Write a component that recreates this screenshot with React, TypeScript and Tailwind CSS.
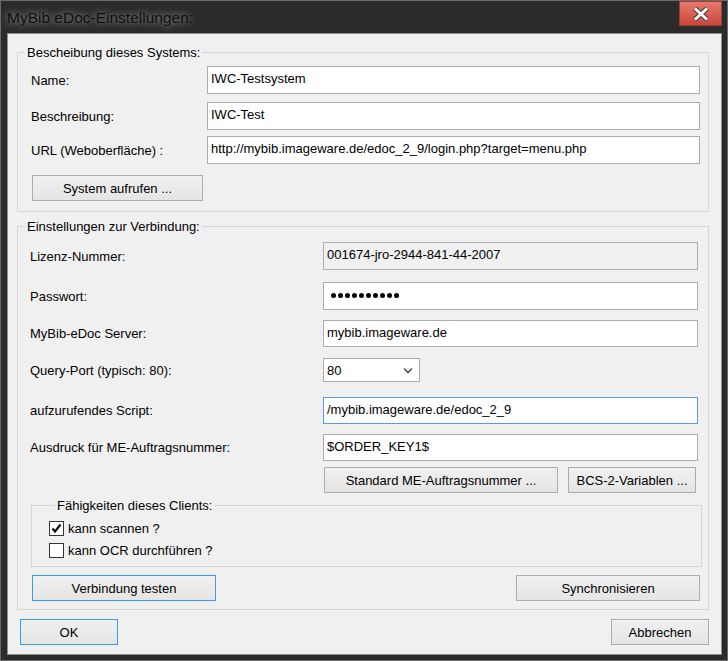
import React from "react";

const Input = ({
  value,
  width = "w-[493px]",
  height = "h-[28px]",
  readOnly = false,
  focus = false,
}: {
  value: string;
  width?: string;
  height?: string;
  readOnly?: boolean;
  focus?: boolean;
}) => (
  <div
    className={`${width} ${height} flex items-center pl-[3px] pb-[3px] border text-[13px] leading-[15px] text-black whitespace-nowrap overflow-hidden ${
      readOnly ? "bg-[#f0f0f0]" : "bg-white"
    } ${focus ? "border-[#569de5]" : "border-[#abadb3]"}`}
  >
    {value}
  </div>
);

const Btn = ({
  label,
  width,
  blue = false,
}: {
  label: string;
  width: string;
  blue?: boolean;
}) => (
  <button
    className={`${width} h-[26px] flex items-center justify-center border bg-gradient-to-b from-[#f0f0f0] to-[#e5e5e5] text-[13px] leading-[15px] text-black ${
      blue ? "border-[#3c9bef]" : "border-[#acacac]"
    }`}
  >
    {label}
  </button>
);

const Legend = ({ text, indent }: { text: string; indent: string }) => (
  <legend className={`${indent} px-[2px] text-[13px] leading-[15px] text-black`}>
    {text}
  </legend>
);

const Checkbox = ({ checked, label }: { checked: boolean; label: string }) => (
  <div className="flex items-center gap-[4px] h-[15px]">
    <div className="w-[15px] h-[15px] border border-[#333333] bg-white flex items-center justify-center">
      {checked && (
        <svg width="13" height="13" viewBox="0 0 13 13">
          <polyline
            points="2.5,6.5 5,9.5 10.5,2.5"
            fill="none"
            stroke="#111"
            strokeWidth="2.3"
          />
        </svg>
      )}
    </div>
    <span className="text-[13px] leading-[15px] text-black">{label}</span>
  </div>
);

export default function App() {
  const row1 = "flex items-center pl-[13px]";
  const row2 = "flex items-center pl-[12px]";
  const lab1 = "w-[176px] text-[13px] leading-[15px] text-black";
  const lab2 = "w-[293px] text-[13px] leading-[15px] text-black";

  return (
    <div className="w-[728px] h-[661px] bg-[#2b2b2b] border border-[#6b6b6b] flex flex-col font-['Liberation_Sans',Arial,sans-serif]">
      {/* title bar */}
      <div className="h-[32px] flex justify-between pl-[6px] pr-[5px]">
        <span className="h-[32px] flex items-center pt-[1px] text-[15.5px] text-[#101010] [text-shadow:0_0_6px_rgba(255,255,255,0.45),0_0_12px_rgba(255,255,255,0.3)]">
          MyBib eDoc-Einstellungen:
        </span>
        <button className="w-[43px] h-[25px] border border-[#9e3b31] bg-gradient-to-b from-[#e9786d] to-[#c8463a] flex items-center justify-center">
          <svg width="20" height="16" viewBox="0 0 20 16">
            <path d="M4 2.5 L16 13.5 M16 2.5 L4 13.5" stroke="#3a3a3a" strokeWidth="5" />
            <path d="M4 2.5 L16 13.5 M16 2.5 L4 13.5" stroke="#ffffff" strokeWidth="3" />
          </svg>
        </button>
      </div>

      {/* client area */}
      <div className="ml-[6px] w-[715px] h-[622px] bg-[#f0f0f0] border border-[#8c8c8c] flex flex-col">
        <fieldset className="mt-[11px] ml-[9px] w-[692px] border border-[#d5d5d5] pt-[6px] pb-[10px]">
          <Legend text="Bescheibung dieses Systems:" indent="ml-[7px]" />
          <div className={row1}>
            <span className={lab1}>Name:</span>
            <Input value="IWC-Testsystem" />
          </div>
          <div className={`${row1} mt-[8px]`}>
            <span className={lab1}>Beschreibung:</span>
            <Input value="IWC-Test" />
          </div>
          <div className={`${row1} mt-[6px]`}>
            <span className={lab1}>URL (Weboberfläche) :</span>
            <Input value="http://mybib.imageware.de/edoc_2_9/login.php?target=menu.php" />
          </div>
          <div className="mt-[11px] ml-[14px]">
            <Btn label="System aufrufen ..." width="w-[171px]" />
          </div>
        </fieldset>

        <fieldset className="mt-[7px] ml-[9px] w-[692px] border border-[#d5d5d5] pt-[8px] pb-[8px]">
          <Legend text="Einstellungen zur Verbindung:" indent="ml-[7px]" />
          <div className={row2}>
            <span className={lab2}>Lizenz-Nummer:</span>
            <Input value="001674-jro-2944-841-44-2007" width="w-[375px]" readOnly />
          </div>
          <div className={`${row2} mt-[12px]`}>
            <span className={lab2}>Passwort:</span>
            <div className="w-[375px] h-[28px] bg-white border border-[#abadb3] flex items-center gap-[2px] pl-[7px] pb-[2px]">
              {Array.from({ length: 10 }).map((_, i) => (
                <span key={i} className="w-[5px] h-[5px] rounded-full bg-black" />
              ))}
            </div>
          </div>
          <div className={`${row2} mt-[10px]`}>
            <span className={lab2}>MyBib-eDoc Server:</span>
            <Input value="mybib.imageware.de" width="w-[375px]" height="h-[27px]" />
          </div>
          <div className={`${row2} mt-[11px]`}>
            <span className={lab2}>Query-Port (typisch: 80):</span>
            <div className="w-[97px] h-[24px] bg-white border border-[#acacac] flex items-center justify-between pl-[3px] pr-[6px] text-[13px] leading-[15px] text-black">
              <span>80</span>
              <svg width="10" height="7" viewBox="0 0 10 7">
                <polyline points="1,1.5 5,5.5 9,1.5" fill="none" stroke="#555" strokeWidth="1.6" />
              </svg>
            </div>
          </div>
          <div className={`${row2} mt-[15px]`}>
            <span className={lab2}>aufzurufendes Script:</span>
            <Input value="/mybib.imageware.de/edoc_2_9" width="w-[375px]" height="h-[27px]" focus />
          </div>
          <div className={`${row2} mt-[10px]`}>
            <span className={lab2}>Ausdruck für ME-Auftragsnummer:</span>
            <Input value="$ORDER_KEY1$" width="w-[375px]" height="h-[27px]" />
          </div>
          <div className="flex gap-[10px] mt-[6px] pl-[306px]">
            <Btn label="Standard ME-Auftragsnummer ..." width="w-[234px]" />
            <Btn label="BCS-2-Variablen ..." width="w-[128px]" />
          </div>

          <fieldset className="mt-[5px] ml-[13px] w-[671px] border border-[#d5d5d5] pt-[8px] pb-[8px] pl-[17px]">
            <Legend text="Fähigkeiten dieses Clients:" indent="ml-[6px]" />
            <Checkbox checked label="kann scannen ?" />
            <div className="mt-[7px]">
              <Checkbox checked={false} label="kann OCR durchführen ?" />
            </div>
          </fieldset>

          <div className="flex justify-between mt-[8px] ml-[14px] mr-[8px]">
            <Btn label="Verbindung testen" width="w-[184px]" blue />
            <Btn label="Synchronisieren" width="w-[184px]" />
          </div>
        </fieldset>

        <div className="flex justify-between mt-[9px] mx-[12px]">
          <Btn label="OK" width="w-[98px]" blue />
          <Btn label="Abbrechen" width="w-[98px]" />
        </div>
      </div>
    </div>
  );
}
